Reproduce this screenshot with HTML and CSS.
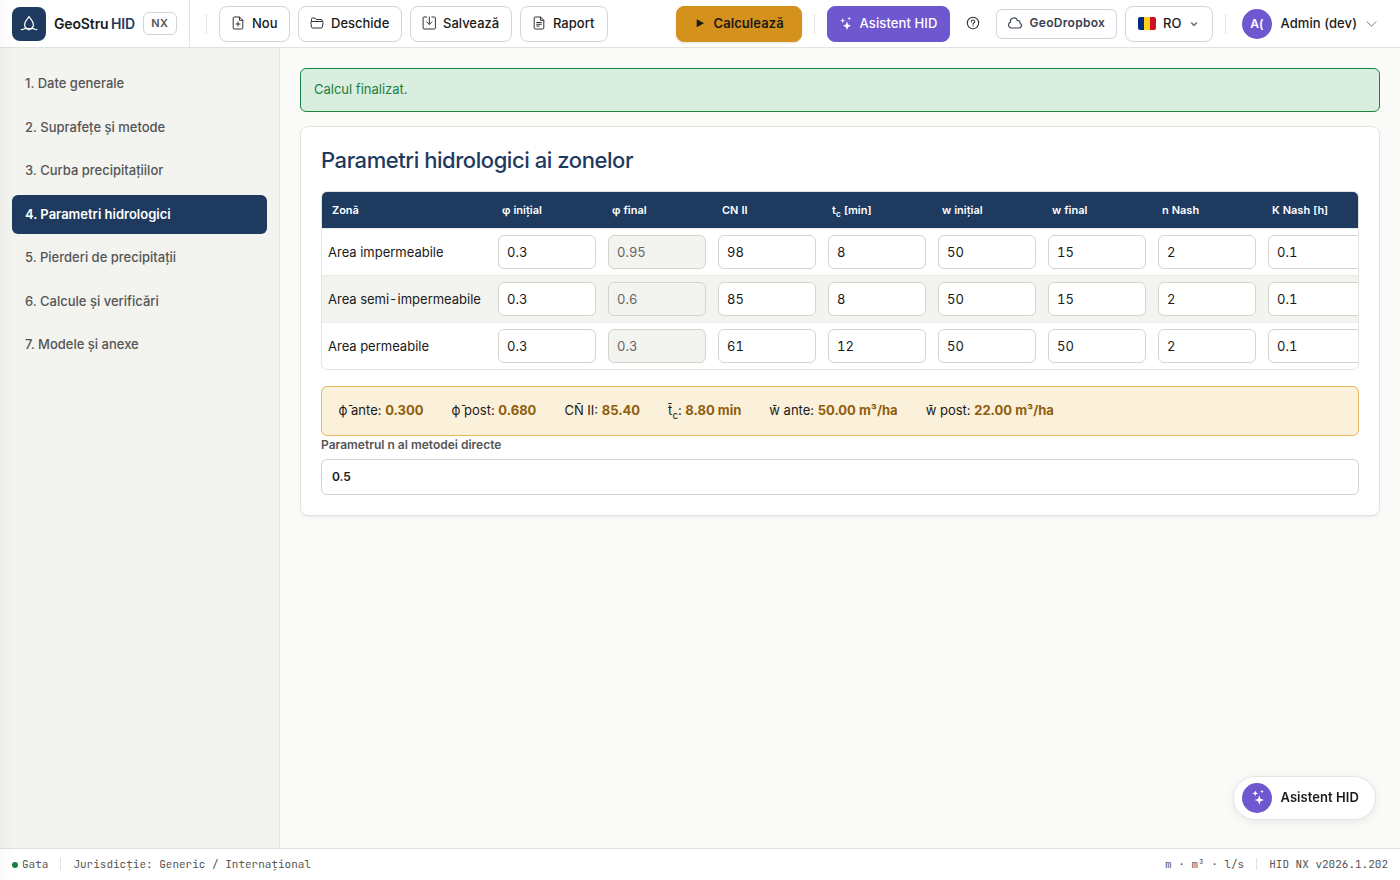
FILE: index.html
```
<!DOCTYPE html>
<html lang="ro">
<head>
<meta charset="utf-8">
<title>GeoStru HID NX</title>
<link rel="stylesheet" href="styles.css">
</head>
<body>
<div class="app">
<header class="topbar">
  <div class="brand">
    <span class="logo"><svg width="18" height="18" viewBox="0 0 18 18" fill="none" stroke="#fff" stroke-width="1.2" stroke-linecap="round" stroke-linejoin="round"><path d="M9 13.600C6.200 13.600 4.600 11.600 4.600 9.400C4.600 6.600 7.300 4.300 9 1.600C10.700 4.300 13.400 6.600 13.400 9.400C13.400 11.600 11.800 13.600 9 13.600Z"/><path d="M1.200 14.500C3.600 14.800 3.800 13.400 5.500 13.400C7.200 13.400 7.300 14.800 9 14.800C10.700 14.800 10.800 13.400 12.500 13.400C14.200 13.400 14.400 14.800 16.800 14.500"/></svg></span>
    <span class="brand-name">GeoStru <b>HID</b></span>
    <span class="edition">NX</span>
  </div>
  <span class="sep sep-first"></span>
  <div class="actions">
    <button class="btn btn-new"><svg width="14" height="14" viewBox="0 0 14 14" class="ico"><path d="M8.500 1H3.200Q2.200 1 2.200 2V12Q2.200 13 3.200 13H10.800Q11.800 13 11.800 12V4.300L8.500 1V4.300H11.800M7 6V10M5 8H9"/></svg>Nou</button>
    <button class="btn btn-open"><svg width="14" height="14" viewBox="0 0 14 14" class="ico"><path d="M1.500 5.500V3.200Q1.500 2 2.700 2H5L6.300 3.500H11Q12.300 3.500 12.300 5V5.500M1.800 5.500H12.300Q13.300 5.500 13.100 6.500L12.400 11Q12.200 12 11.200 12H2.700Q1.700 12 1.500 11L.8 6.500Q.7 5.500 1.800 5.500Z"/></svg>Deschide</button>
    <button class="btn btn-save"><svg width="14" height="14" viewBox="-.5 0 14 14" class="ico"><path d="M4.200 1H1.500Q.6 1 .6 1.900V12Q.6 13 1.500 13H11.900Q12.900 13 12.900 12V1.900Q12.900 1 11.900 1H9.300M6.800 1V8.300M4.100 5.800L6.800 8.500L9.500 5.800"/></svg>Salvează</button>
    <button class="btn btn-report"><svg width="14" height="14" viewBox="0 0 14 14" class="ico"><path d="M8.500 1H3.200Q2.200 1 2.200 2V12Q2.200 13 3.200 13H10.800Q11.800 13 11.800 12V4.300L8.500 1V4.300H11.800M4.700 6.500H9.300M4.700 8.300H9.300M4.700 10.100H7.200"/></svg>Raport</button>
  </div>
  <div class="tools">
    <button class="btn btn-calc"><svg width="14" height="14" viewBox="0 0 14 14"><path d="M3.700 3.300V11.200L11 7.250Z" fill="#1a1a1a"/></svg>Calculează</button>
    <span class="sep"></span>
    <button class="btn btn-ai"><svg width="14" height="14" viewBox="0 0 14 14" fill="#fff"><path d="M8 5.500L9.200 8.500L12 9.700L9.200 10.900L8 13.900L6.800 10.900L4 9.700L6.800 8.500ZM3.700 2L4.400 3.900L6.300 4.600L4.400 5.300L3.700 7.200L3 5.300L1.100 4.600L3 3.900ZM10.200 .8L10.700 2.100L12 2.600L10.700 3.100L10.200 4.400L9.700 3.100L8.400 2.600L9.700 2.100Z"/></svg>Asistent HID</button>
    <button class="help" aria-label="Ajutor"><svg width="14" height="14" viewBox="0 0 14 14" class="ico help-ico"><circle cx="7" cy="7" r="5.700"/><path d="M5.300 5.700C5.300 3.400 8.800 3.500 8.800 5.500C8.800 6.800 7 6.800 7 8.200M7 9.900V10"/></svg></button>
    <button class="dropbox"><svg width="16" height="16" viewBox="0 0 24 24" fill="none" stroke="#374151" stroke-width="1.700" stroke-linejoin="round"><path d="M2.250 15a4.500 4.500 0 0 0 4.500 4.500H18a3.750 3.750 0 0 0 1.332-7.257 3 3 0 0 0-3.758-3.848 5.250 5.250 0 0 0-10.233 2.330A4.502 4.502 0 0 0 2.250 15Z"/></svg>GeoDropbox</button>
    <button class="btn btn-lang"><span class="flag"><i class="f-blue"></i><i class="f-yellow"></i><i class="f-red"></i></span><span>RO</span><svg width="8" height="8" viewBox="0 0 8 8" fill="none" stroke="#777" stroke-width="1.600"><path d="M1.200 2.700L4 5.400L6.800 2.700"/></svg></button>
    <span class="sep"></span>
    <div class="user"><span class="avatar">A(</span><span>Admin (dev)</span><svg width="11" height="8" viewBox="0 0 11 8" fill="none" stroke="#777" stroke-width="1"><path d="M.8 1.500L5.500 6.200L10.200 1.500"/></svg></div>
  </div>
</header>
<div class="body">
  <nav class="sidebar">
    <a class="nav">1. Date generale</a>
    <a class="nav">2. Suprafețe și metode</a>
    <a class="nav">3. Curba precipitațiilor</a>
    <a class="nav active">4. Parametri hidrologici</a>
    <a class="nav">5. Pierderi de precipitații</a>
    <a class="nav">6. Calcule și verificări</a>
    <a class="nav">7. Modele și anexe</a>
  </nav>
  <main class="main">
    <div class="alert">Calcul finalizat.</div>
    <section class="card">
      <h1 class="title">Parametri hidrologici ai zonelor</h1>
      <div class="table-wrap">
        <table class="grid">
          <thead><tr><th class="zone">Zonă</th><th>φ inițial</th><th>φ final</th><th>CN II</th><th>t<sub>c</sub> [min]</th><th>w inițial</th><th>w final</th><th>n Nash</th><th>K Nash [h]</th></tr></thead>
          <tbody>
            <tr><td class="name">Area impermeabile</td><td><input value="0.3"></td><td><input value="0.95" disabled></td><td><input value="98"></td><td><input value="8"></td><td><input value="50"></td><td><input value="15"></td><td><input value="2"></td><td><input value="0.1"></td></tr>
            <tr><td class="name">Area semi-impermeabile</td><td><input value="0.3"></td><td><input value="0.6" disabled></td><td><input value="85"></td><td><input value="8"></td><td><input value="50"></td><td><input value="15"></td><td><input value="2"></td><td><input value="0.1"></td></tr>
            <tr><td class="name">Area permeabile</td><td><input value="0.3"></td><td><input value="0.3" disabled></td><td><input value="61"></td><td><input value="12"></td><td><input value="50"></td><td><input value="50"></td><td><input value="2"></td><td><input value="0.1"></td></tr>
          </tbody>
        </table>
      </div>
      <div class="summary">
        <span>ϕ̄ ante: <strong>0.300</strong></span>
        <span>ϕ̄ post: <strong>0.680</strong></span>
        <span>CN̄ II: <strong>85.40</strong></span>
        <span>t̄<sub>c</sub>: <strong>8.80 min</strong></span>
        <span>w̄ ante: <strong>50.00 m³/ha</strong></span>
        <span>w̄ post: <strong>22.00 m³/ha</strong></span>
      </div>
      <label class="field">Parametrul n al metodei directe<input class="field-input" value="0.5"></label>
    </section>
  </main>
</div>
<footer class="status">
  <span class="dot"></span><span>Gata</span><span class="bar"></span><span>Jurisdicție: Generic / Internațional</span>
  <span class="status-right"><span>m · m³ · l/s</span><span class="bar"></span><span>HID NX v2026.1.202</span></span>
</footer>
</div>
<div class="drawer"></div>
<button class="fab"><span class="fab-icon"><svg width="16" height="16" viewBox="0 0 16 16" fill="#fff"><path d="M10.300 5.300L11.500 8.700L15 10L11.500 11.300L10.300 14.700L9.100 11.300L5.600 10L9.100 8.700ZM6.300 .5L7.100 2.600L9.200 3.400L7.100 4.200L6.300 6.300L5.500 4.200L3.400 3.400L5.500 2.600ZM13 -.2L13.500 1.100L14.800 1.600L13.500 2.100L13 3.400L12.500 2.100L11.200 1.600L12.500 1.100Z"/></svg></span>Asistent HID</button>
</body>
</html>
```
FILE: styles.css
```
* { box-sizing: border-box; }
body { margin: 0; font: 13px/1.5 Inter, "Noto Sans", sans-serif; color: #1a1a1a; background: #fafaf8; overflow: hidden; }
button, input { font: inherit; color: inherit; }
.app { height: 100vh; display: grid; grid-template-rows: 48px 1fr 32px; }

.topbar { display: flex; align-items: center; background: #fff; border-bottom: 1px solid #e2e2de; padding-right: 23px; }
.brand { width: 190px; height: 47px; padding-left: 12px; display: flex; align-items: center; border-right: 1px solid #e5e5e0; flex: none; }
.logo { width: 34px; height: 34px; border-radius: 8px; background: #1e3a5f; display: grid; place-items: center; }
.brand-name { margin-left: 8px; font-size: 14px; font-weight: 600; letter-spacing: -.14px; white-space: nowrap; }
.brand-name b { color: #1e3a5f; font-weight: 600; margin-left: -1px; }
.edition { margin-left: 8px; width: 34px; height: 23px; border: 1px solid #d4d4cc; border-radius: 6px; display: grid; place-items: center; font-size: 11px; font-weight: 600; letter-spacing: .5px; color: #555; }
.sep { width: 1px; height: 20px; background: #e2e2de; margin: 0 12px; flex: none; }
.sep-first { margin-left: 16px; }
.actions { display: flex; gap: 8px; }
.btn { height: 36px; padding: 0 0 0 11px; display: flex; align-items: center; gap: 7px; border: 1px solid #d4d4cc; border-radius: 8px; background: #fff; font-weight: 500; white-space: nowrap; flex: none; }
.btn svg { flex: none; }
.ico { fill: none; stroke: #333; stroke-width: 1; stroke-linejoin: round; stroke-linecap: round; }
.btn .ico, .btn-ai svg, .btn-calc svg { margin-bottom: 2px; }
.btn-new { width: 71px; }
.btn-open { width: 104px; }
.btn-save { width: 102px; }
.btn-report { width: 88px; }
.tools { margin-left: auto; display: flex; align-items: center; }
.btn-calc { width: 126px; padding-left: 16px; gap: 6.6px; background: #d4911c; border-color: #d4911c; font-weight: 600; letter-spacing: .06px; box-shadow: 0 1px 2px rgba(0,0,0,.12); }
.btn-ai { width: 123px; background: #6f57d0; border-color: #6f57d0; color: #fff; gap: 6.6px; letter-spacing: .1px; }
.help { width: 46px; height: 32px; padding: 0 0 2px; border: 0; background: none; display: grid; place-items: center; }
.help-ico { stroke-width: 1.1; }
.dropbox { width: 121px; height: 30px; padding: 0 0 1px 10px; display: flex; align-items: center; gap: 6.6px; border: 1px solid #d1d5db; border-radius: 6px; background: #fff; font-size: 12px; font-weight: 600; color: #374151; letter-spacing: .28px; }
.btn-lang { width: 88px; margin-left: 8px; padding-left: 12px; gap: 7px; }
.btn-lang svg { margin-left: 2px; }
.flag { width: 18px; height: 13px; border-radius: 2px; overflow: hidden; display: flex; }
.flag i { flex: 1; }
.f-blue { background: #002b7f; }
.f-yellow { background: #fcd116; }
.f-red { background: #ce1126; }
.user { display: flex; align-items: center; width: 135px; margin-left: 4px; font-weight: 500; letter-spacing: .08px; white-space: nowrap; }
.avatar { width: 30px; height: 30px; border-radius: 50%; background: #6f57d0; color: #fff; display: grid; place-items: center; font-size: 12px; font-weight: 600; margin-right: 8.5px; flex: none; }
.user svg { margin-left: auto; flex: none; }

.body { display: grid; grid-template-columns: 280px 1fr; min-height: 0; }
.sidebar { background: #f3f3ef; border-right: 1px solid #e2e2de; padding: 16px 12px; display: flex; flex-direction: column; gap: 4px; }
.nav { padding: 9px 12px; border: 1px solid transparent; border-radius: 6px; color: #555; font-weight: 500; }
.active { background: #1e3a5f; color: #fff; font-weight: 600; }
.main { padding: 20px; min-width: 0; }
.alert { padding: 11px 13px; height: 43.5px; border: 1px solid #1a8245; border-radius: 6px; background: #d9eedf; color: #1a7f42; margin-bottom: 14.500px; }
.card { background: #fff; border: 1px solid #e5e5e0; border-radius: 8px; padding: 20px; height: 390px; box-shadow: 0 1px 2px rgba(0,0,0,.07); }
.title { margin: 0 0 17px; font-size: 22px; line-height: 27px; font-weight: 500; color: #1e3a5f; letter-spacing: -.44px; }
.table-wrap { border: 1px solid #e2e2de; border-radius: 6px; overflow: hidden; height: 179px; }
.grid { table-layout: fixed; width: 1050px; border-collapse: separate; border-spacing: 0; font-variant-numeric: tabular-nums; }
.grid th { height: 36px; padding: 0 10px; width: 110px; background: #1e3a5f; color: #fff; font-size: 11px; font-weight: 600; text-align: left; line-height: 16px; }
.grid .zone { width: 170px; }
sub { font-size: .75em; line-height: 0; }
.grid td { height: 47px; padding: 6px; border-top: 1px solid #ebebe7; white-space: nowrap; }
.grid .name { padding-top: 8px; }
.grid tr:nth-child(2) td { background: #f3f3ef; }
.grid input { display: block; width: 98px; height: 34px; padding: 0 8px; border: 1px solid #d4d4cc; border-radius: 6px; background: #fff; }
.grid input:disabled { background: #f3f3ef; color: #666; }
.summary { margin-top: 16px; height: 50px; padding: 0 16.5px; display: flex; align-items: center; gap: 28px; border: 1px solid #e5b85c; border-radius: 6px; background: #fbf0d9; white-space: nowrap; }
.summary strong { color: #8f5d0c; font-weight: 700; }
.field { display: block; font-size: 12px; line-height: 18px; font-weight: 600; color: #555; }
.field-input { display: block; width: 100%; height: 36px; margin-top: 5px; padding: 0 10px 1px; border: 1px solid #d4d4cc; border-radius: 6px; color: #1a1a1a; background: #fff; }

.status { display: flex; align-items: center; border-top: 1px solid #e2e2de; background: #fff; padding: 0 12px 1px; font: 11px "JetBrains Mono", "DejaVu Sans Mono", monospace; color: #555; white-space: pre; }
.dot { width: 6px; height: 6px; border-radius: 50%; background: #1a7f42; margin: 1px 4px 0 0; }
.bar { width: 1px; height: 12px; background: #e2e2de; margin: 0 12px; }
.status-right { margin-left: auto; display: flex; align-items: center; }
.drawer { position: fixed; top: 0; bottom: 0; left: -20px; width: 20px; box-shadow: 0 0 20px rgba(0,0,0,.05); pointer-events: none; }
.fab { position: fixed; right: 24px; bottom: 60px; width: 143px; height: 44px; padding: 0 0 0 8px; display: flex; align-items: center; gap: 8.5px; border: 1px solid #e5e5e0; border-radius: 22px; background: #fff; font-weight: 600; letter-spacing: .06px; box-shadow: 0 2px 8px rgba(0,0,0,.08); white-space: nowrap; }
.fab-icon { width: 30px; height: 30px; border-radius: 50%; background: #6f57d0; display: grid; place-items: center; }
```
